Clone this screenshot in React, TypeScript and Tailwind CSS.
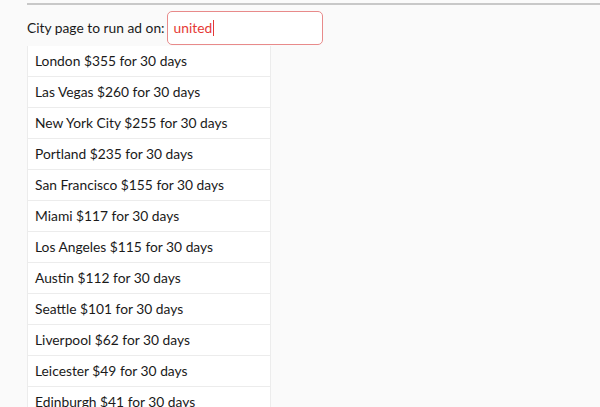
const cities = [
  "London $355 for 30 days",
  "Las Vegas $260 for 30 days",
  "New York City $255 for 30 days",
  "Portland $235 for 30 days",
  "San Francisco $155 for 30 days",
  "Miami $117 for 30 days",
  "Los Angeles $115 for 30 days",
  "Austin $112 for 30 days",
  "Seattle $101 for 30 days",
  "Liverpool $62 for 30 days",
  "Leicester $49 for 30 days",
  "Edinburgh $41 for 30 days",
];

export default function App() {
  return (
    <div
      className="h-[407px] w-[600px] overflow-hidden bg-[#fafafa] pl-[27px] text-[#1a1a1a]"
      style={{ fontFamily: "Lato, 'Open Sans', sans-serif" }}
    >
      <div className="mt-[3px] h-[2px] bg-[#c8c8c8]" />
      {/* 输入行 */}
      <div className="mt-[6px] flex items-center gap-[2px]">
        <label className="text-[13.8px]">City page to run ad on:</label>
        <div className="flex h-[34px] w-[156px] items-center rounded-[5px] border border-[#e88a8a] bg-white px-[6px] text-[13.8px] text-[#e53935]">
          united
          <span className="ml-[1px] h-[16px] w-[1px] bg-[#e53935]" />
        </div>
      </div>
      {/* 城市列表 */}
      <ul className="mt-[1px] w-[244px] border-l border-r border-[#ececec] bg-white">
        {cities.map((c) => (
          <li
            key={c}
            className="flex h-[31px] items-center border-b border-[#ececec] px-[7px] text-[13.8px]"
          >
            {c}
          </li>
        ))}
      </ul>
    </div>
  );
}
